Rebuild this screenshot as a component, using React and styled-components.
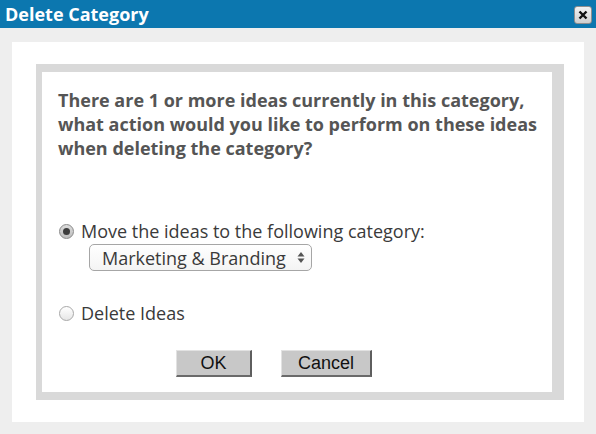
import React from "react";
import styled, { createGlobalStyle } from "styled-components";

const Global = createGlobalStyle`
  html, body { margin: 0; padding: 0; background: #eeeeee; }
  body { font-family: "Open Sans", "DejaVu Sans", sans-serif; }
  * { box-sizing: border-box; }
`;

const Dialog = styled.div`
  width: 596px;
  height: 434px;
  display: flex;
  flex-direction: column;
  background: #eeeeee;
`;

const TitleBar = styled.div`
  height: 28px;
  flex: none;
  background: #0c77af;
  display: flex;
  align-items: center;
  justify-content: space-between;
  padding: 0 4px 0 5px;
`;

const Title = styled.h1`
  margin: 0;
  font-family: "Open Sans", sans-serif;
  font-weight: 700;
  font-size: 18px;
  color: #ffffff;
  line-height: 28px;
`;

const CloseButton = styled.button`
  width: 18px;
  height: 18px;
  padding: 0;
  margin-top: 1px;
  border: 1px solid #8f8f8f;
  border-radius: 3px;
  background: linear-gradient(#f2f2f2, #cfcfcf);
  display: flex;
  align-items: center;
  justify-content: center;
`;

const Body = styled.div`
  flex: 1;
  padding: 14px 12px 12px 12px;
  display: flex;
`;

const Panel = styled.div`
  flex: 1;
  background: #ffffff;
  padding: 22px 20px 22px 24px;
  display: flex;
`;

const Frame = styled.div`
  flex: 1;
  background: #ffffff;
  border-style: solid;
  border-color: #d9d9d9;
  border-width: 8px 12px 8px 6px;
  padding: 16px 0 0 16px;
  display: flex;
  flex-direction: column;
`;

const Question = styled.p`
  margin: 0;
  font-weight: 700;
  font-size: 18px;
  line-height: 24px;
  color: #555555;
  white-space: nowrap;
`;

const Options = styled.div`
  margin-top: 59px;
  display: flex;
  flex-direction: column;
`;

const OptionRow = styled.label`
  display: flex;
  align-items: center;
  gap: 7px;
  height: 24px;
  line-height: 24px;
  font-size: 18px;
  color: #3a3a3a;
  margin-top: ${(p) => p.$gap || 0}px;
`;

const Radio = styled.span`
  width: 15px;
  height: 15px;
  margin-left: 1px;
  border-radius: 50%;
  border: 1px solid ${(p) => (p.$checked ? "#8a8a8a" : "#a8a8a8")};
  background: ${(p) =>
    p.$checked
      ? "linear-gradient(#dcdcdc, #bdbdbd)"
      : "linear-gradient(#ffffff, #e6e6e6)"};
  display: flex;
  align-items: center;
  justify-content: center;
  flex: none;
  &::after {
    content: "";
    display: ${(p) => (p.$checked ? "block" : "none")};
    width: 7px;
    height: 7px;
    border-radius: 50%;
    background: #3c3c3c;
  }
`;

const SelectBox = styled.div`
  margin: 1px 0 0 31px;
  width: 223px;
  height: 27px;
  border: 1px solid #a6a6a6;
  border-radius: 5px;
  background: linear-gradient(#ffffff, #f4f4f4);
  display: flex;
  align-items: center;
  justify-content: space-between;
  padding: 0 6px 0 12px;
  font-size: 18px;
  color: #3a3a3a;
  white-space: nowrap;
`;

const Buttons = styled.div`
  margin: 25px 0 0 118px;
  display: flex;
  gap: 29px;
`;

const Button = styled.button`
  height: 27px;
  width: ${(p) => p.$w}px;
  padding: 0;
  font-family: "Liberation Sans", Arial, sans-serif;
  font-size: 18px;
  color: #111;
  background: #c8c8c8;
  border-style: solid;
  border-width: 1px 2px 2px 1px;
  border-color: #e2e2e2 #5e5e5e #6a6a6a #e2e2e2;
`;

function Arrows() {
  return (
    <svg width="8" height="13" viewBox="0 0 8 13">
      <path d="M4 1 L7.5 5.5 H0.5 Z" fill="#555" />
      <path d="M4 12 L7.5 7.5 H0.5 Z" fill="#555" />
    </svg>
  );
}

export default function App() {
  return (
    <>
      <Global />
      <Dialog>
        <TitleBar>
          <Title>Delete Category</Title>
          <CloseButton aria-label="Close">
            <svg width="10" height="10" viewBox="0 0 10 10">
              <path d="M1.5 1.5 L8.5 8.5 M8.5 1.5 L1.5 8.5" stroke="#111" strokeWidth="2.4" />
            </svg>
          </CloseButton>
        </TitleBar>
        <Body>
          <Panel>
            <Frame>
              <Question>
                There are 1 or more ideas currently in this category,
                <br />
                what action would you like to perform on these ideas
                <br />
                when deleting the category?
              </Question>
              <Options>
                <OptionRow>
                  <Radio $checked />
                  Move the ideas to the following category:
                </OptionRow>
                <SelectBox>
                  Marketing &amp; Branding
                  <Arrows />
                </SelectBox>
                <OptionRow $gap={30}>
                  <Radio />
                  Delete Ideas
                </OptionRow>
              </Options>
              <Buttons>
                <Button $w={76}>OK</Button>
                <Button $w={91}>Cancel</Button>
              </Buttons>
            </Frame>
          </Panel>
        </Body>
      </Dialog>
    </>
  );
}
